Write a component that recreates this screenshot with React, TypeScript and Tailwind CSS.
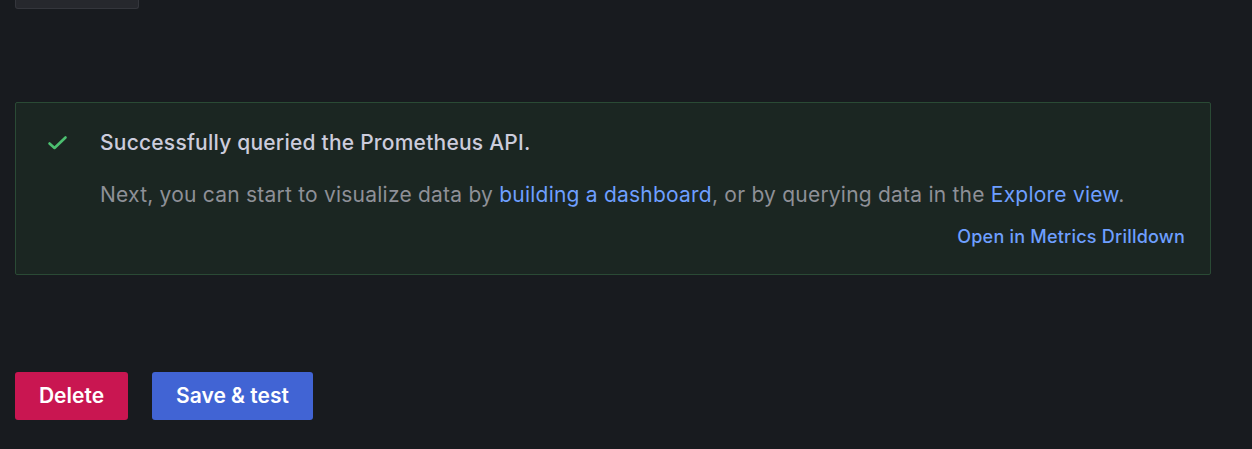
export default function App() {
  return (
    <div className="w-[1252px] h-[449px] bg-[#181b1f] overflow-hidden" style={{ fontFamily: "Inter, 'Noto Sans', sans-serif" }}>
      <div className="ml-[15px] w-[124px] h-[9px] bg-[#26282d] border border-t-0 border-[#34363c] rounded-b-[3px]" />
      <div className="ml-[15px] mt-[93px] w-[1196px] h-[173px] bg-[#1b2622] border border-[#2a4a35] rounded-[2px] flex">
        <div className="w-[84px] pl-[30px] pt-[28px] shrink-0">
          <svg width="24" height="24" viewBox="0 0 24 24" fill="none">
            <path d="M3.5 12.5l5 4.5 11-10.5" stroke="#4cbf70" strokeWidth="2.6" strokeLinecap="round" strokeLinejoin="round" />
          </svg>
        </div>
        <div className="flex-1 pr-[25px] tracking-[0.22px]">
          <div className="mt-[24px] text-[21px] leading-[31.5px] font-medium text-[#ccccdc]">Successfully queried the Prometheus API.</div>
          <div className="mt-[20px] text-[21px] leading-[31.5px] text-[#8e9097]">
            Next, you can start to visualize data by <span className="text-[#6e9fff]">building a dashboard</span>, or by querying data in the <span className="text-[#6e9fff]">Explore view</span>.
          </div>
          <div className="mt-[13px] flex justify-end text-[18px] leading-[27px] font-medium text-[#6e9fff]">Open in Metrics Drilldown</div>
        </div>
      </div>
      <div className="ml-[15px] mt-[97px] flex gap-[24px]">
        <button className="h-[48px] w-[113px] bg-[#c91651] rounded-[3px] text-white text-[21px] font-semibold">Delete</button>
        <button className="h-[48px] w-[161px] bg-[#4164d4] rounded-[3px] text-white text-[21px] font-semibold">Save &amp; test</button>
      </div>
    </div>
  );
}
